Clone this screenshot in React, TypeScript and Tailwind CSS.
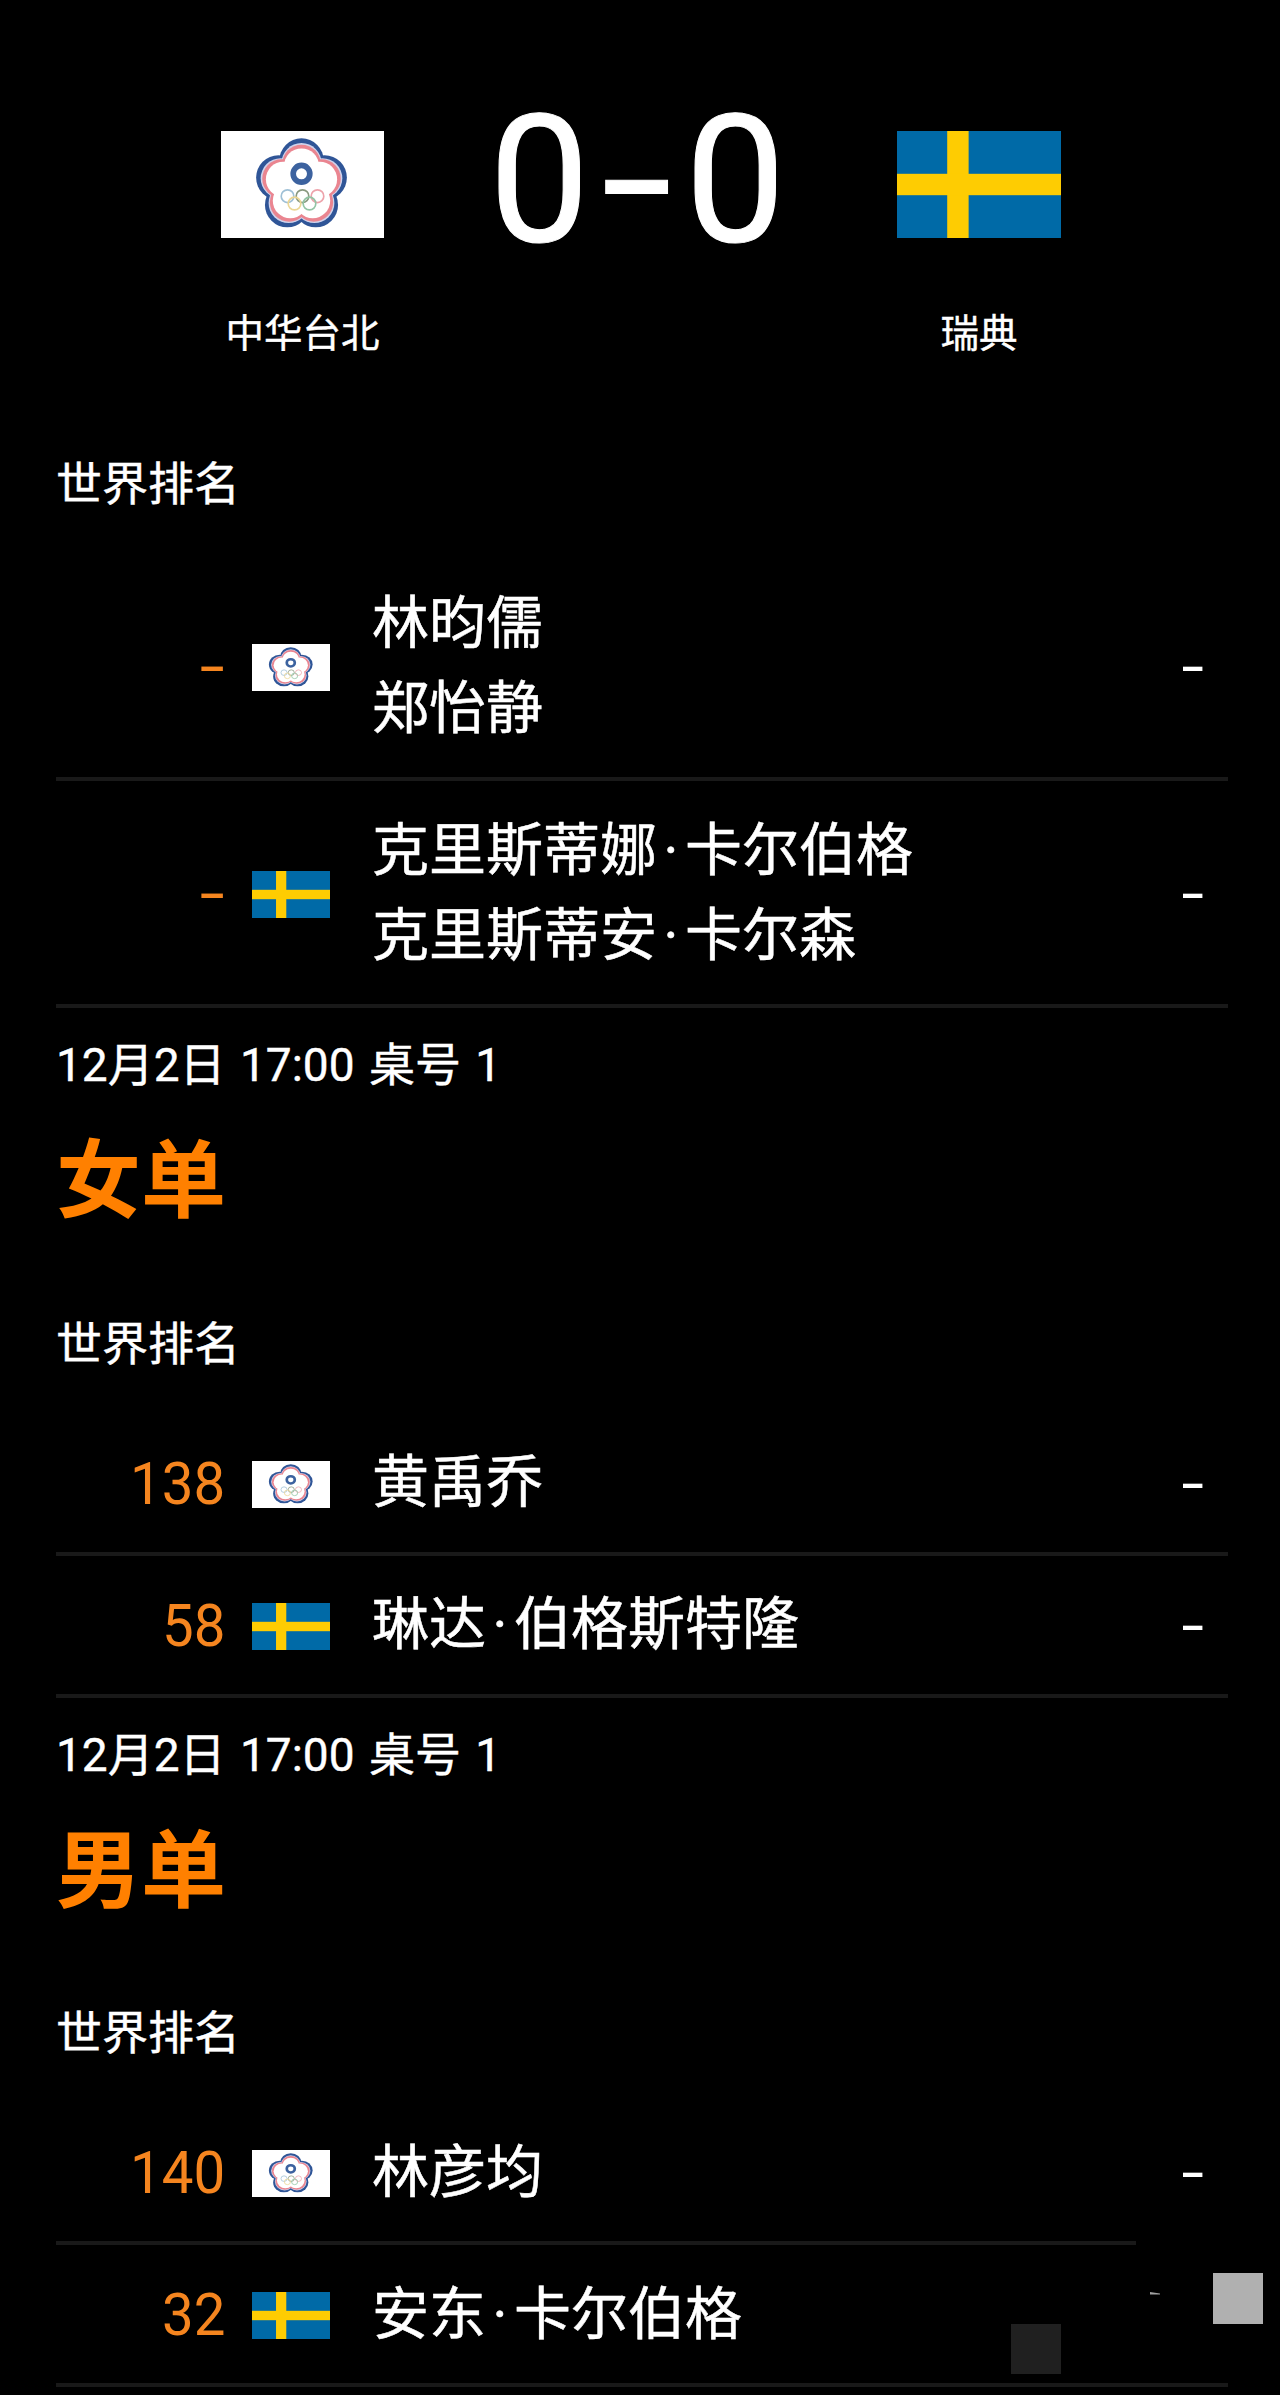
import React from "react";

type Team = "tpe" | "swe";

type Entry = {
  team: Team;
  rank: string;
  names: string[];
};

type Match = {
  time?: string;
  title?: string;
  entries: Entry[];
};

const matches: Match[] = [
  {
    entries: [
      { team: "tpe", rank: "-", names: ["林昀儒", "郑怡静"] },
      {
        team: "swe",
        rank: "-",
        names: ["克里斯蒂娜·卡尔伯格", "克里斯蒂安·卡尔森"],
      },
    ],
  },
  {
    time: "12月2日 17:00 桌号 1",
    title: "女单",
    entries: [
      { team: "tpe", rank: "138", names: ["黄禹乔"] },
      { team: "swe", rank: "58", names: ["琳达·伯格斯特隆"] },
    ],
  },
  {
    time: "12月2日 17:00 桌号 1",
    title: "男单",
    entries: [
      { team: "tpe", rank: "140", names: ["林彦均"] },
      { team: "swe", rank: "32", names: ["安东·卡尔伯格"] },
    ],
  },
];

// petal centres, relative to the middle of the flower
const petals = [
  [0, -73],
  [69.4, -22.6],
  [42.9, 59.1],
  [-42.9, 59.1],
  [-69.4, -22.6],
];

// the flower is stacked from the outside in
const layers = [
  { scale: 1, fill: "#2f5597" },
  { scale: 0.9, fill: "#cfd3ec" },
  { scale: 0.865, fill: "#ea8590" },
  { scale: 0.785, fill: "#ffffff" },
];

const rings = [
  [200, 195, "#9fc0d6"],
  [245, 195, "#8a9a80"],
  [290, 195, "#eda3ab"],
  [221, 217, "#ecd795"],
  [266, 217, "#92c4a4"],
] as const;

const Flag = ({ team, className }: { team: Team; className: string }) => {
  if (team === "swe") {
    return (
      <svg viewBox="0 0 490 320" preserveAspectRatio="none" className={className}>
        <rect width="490" height="320" fill="#006aa7" />
        <rect x="150" width="64" height="320" fill="#fecc02" />
        <rect y="128" width="490" height="64" fill="#fecc02" />
      </svg>
    );
  }

  return (
    <svg viewBox="0 0 490 320" preserveAspectRatio="none" className={className}>
      <rect width="490" height="320" fill="#fff" />
      {layers.map((layer) => (
        <g
          key={layer.scale}
          fill={layer.fill}
          transform={`translate(242 162) scale(${layer.scale})`}
        >
          <circle r="95" />
          {petals.map(([cx, cy]) => (
            <circle key={cx} cx={cx} cy={cy} r="67" />
          ))}
        </g>
      ))}
      <circle cx="242" cy="128" r="25" fill="none" stroke="#3c629f" strokeWidth="17" />
      {rings.map(([cx, cy, color]) => (
        <circle key={cx} cx={cx} cy={cy} r="19" fill="none" stroke={color} strokeWidth="5" />
      ))}
    </svg>
  );
};

const Name = ({ text }: { text: string }) => {
  const [first, last] = text.split("·");

  return (
    <p className="whitespace-nowrap">
      {first}
      {last && <span className="inline-block w-7 text-center">·</span>}
      {last}
    </p>
  );
};

const Row = ({ entry, short }: { entry: Entry; short?: boolean }) => (
  <div>
    <div
      className={`flex items-center ${
        entry.names.length > 1 ? "h-[223px]" : "h-[138px]"
      }`}
    >
      <div className="w-[169px] pt-0.5 text-right text-[60px] leading-none text-[#f5851f]">
        <span
          className={`inline-block origin-right ${
            entry.rank === "-" ? "scale-x-[1.5]" : "scale-x-[0.94]"
          }`}
        >
          {entry.rank}
        </span>
      </div>
      <Flag team={entry.team} className="ml-[26.5px] mt-[3px] h-[47px] w-[78.5px] shrink-0" />
      <div className="ml-[42px] flex-1 text-[57px] leading-[85px] [-webkit-text-stroke:0.5px_white]">
        {entry.names.map((name) => (
          <Name key={name} text={name} />
        ))}
      </div>
      <div className="pr-6 text-[58px] leading-none">
        <span className="inline-block origin-right scale-x-[1.4]">-</span>
      </div>
    </div>
    <div className={`h-1 bg-[#191919] ${short ? "w-[1080px]" : "w-full"}`} />
  </div>
);

const Header = () => (
  <header className="flex h-[427px] justify-between pl-[165px] pr-[167px] pt-[131px]">
    <div className="flex w-[163px] flex-col items-center">
      <Flag team="tpe" className="h-[107px] w-[163px] shrink-0" />
      <p className="mt-[66px] whitespace-nowrap text-[38.5px] leading-[60px] [-webkit-text-stroke:0.4px_white]">
        中华台北
      </p>
    </div>
    {/* Score */}
    <div className="-mt-[41px] mr-[7px] flex h-[180px] items-center text-[179px] leading-[180px] [-webkit-text-stroke:1px_white]">
      <span className="w-[100px] text-center">0</span>
      <span className="flex w-[96px] justify-center">
        <span className="scale-x-[1.44]">-</span>
      </span>
      <span className="w-[100px] text-center">0</span>
    </div>
    <div className="flex w-[164px] flex-col items-center">
      <Flag team="swe" className="h-[107px] w-[164px] shrink-0" />
      <p className="mt-[66px] whitespace-nowrap text-[38.5px] leading-[60px] [-webkit-text-stroke:0.4px_white]">
        瑞典
      </p>
    </div>
  </header>
);

const App = () => {
  return (
    <div className="relative h-[2395px] w-[1280px] overflow-hidden bg-black pl-14 pr-[52px] font-[Roboto,'Noto_Sans_CJK_SC',sans-serif] text-white">
      <Header />

      {matches.map((match, i) => (
        <section key={i}>
          {match.time && (
            <div className="h-[278.5px]">
              <p className="pt-[27px] text-[46px] leading-[60px] [word-spacing:3px] [-webkit-text-stroke:0.4px_white]">
                {match.time}
              </p>
              <h2 className="pt-[37px] text-[85px] font-bold leading-[100px] text-[#ff8000]">
                {match.title}
              </h2>
            </div>
          )}
          <p className="h-[127px] pt-[27px] text-[46px] leading-[60px] [-webkit-text-stroke:0.4px_white]">
            世界排名
          </p>
          {match.entries.map((entry, j) => (
            <Row key={j} entry={entry} short={i === 2 && j === 0} />
          ))}
        </section>
      ))}

      {/* Floating blocks in the corner */}
      <div className="absolute left-[1213px] top-[2273px] h-[51px] w-[50px] bg-[#b0b0b0]" />
      <div className="absolute left-[1011px] top-[2324px] h-[50px] w-[50px] bg-[#202020]" />
      <div className="absolute left-[1110px] top-[2260px] h-[62px] w-[102px] bg-black" />
      <svg viewBox="0 0 10 3" className="absolute left-[1150px] top-[2292px] h-[3px] w-2.5">
        <path d="M0 0L10 1.5V2.5H0Z" fill="#a0a0a0" />
      </svg>
    </div>
  );
};

export default App;
